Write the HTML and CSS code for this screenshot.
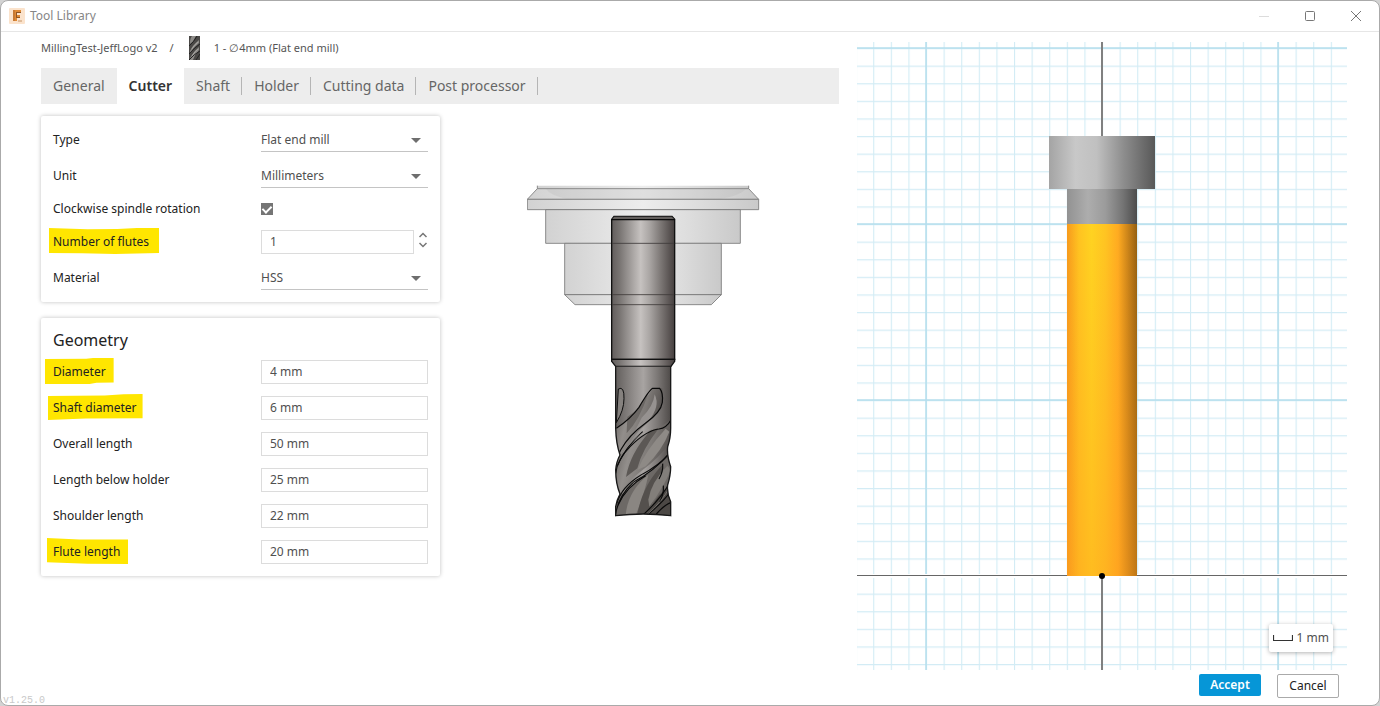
FILE: index.html
```html
<!DOCTYPE html>
<html lang="en">
<head>
<meta charset="utf-8">
<title>Tool Library</title>
<link rel="stylesheet" href="styles.css">
</head>
<body>
<div class="window">
  <header class="titlebar">
    <svg class="app-icon" width="16" height="16" viewBox="0 0 16 16" aria-hidden="true">
      <rect width="16" height="16" rx="1" fill="#fbe3cc"/>
      <path d="M4 2h8v3H8v2h3v3H8v3H4z" fill="#e08a35"/>
      <path d="M4 2h2v11H4z" fill="#c87a33"/>
      <path d="M8 5h4V4H7v6h1zM8 9h3v1H8z" fill="#8f5423"/>
      <path d="M9 13h4" stroke="#c39468"/>
    </svg>
    <span class="window-title">Tool Library</span>
    <div class="window-controls">
      <button type="button" aria-label="Minimize" disabled><svg width="12" height="12" viewBox="0 0 12 12"><path d="M1 6.5h10" stroke="#dcdcdc"/></svg></button>
      <button type="button" aria-label="Maximize"><svg width="12" height="12" viewBox="0 0 12 12"><rect x="1.5" y="1.5" width="9" height="9" rx="1" fill="none" stroke="#777"/></svg></button>
      <button type="button" aria-label="Close"><svg width="12" height="12" viewBox="0 0 12 12"><path d="M1 1l10 10M11 1L1 11" stroke="#777" fill="none"/></svg></button>
    </div>
  </header>

  <main class="content">
    <section class="editor">
      <nav class="breadcrumb" aria-label="Breadcrumb">
        <span>MillingTest-JeffLogo v2</span>
        <span class="slash">/</span>
        <svg class="crumb-icon" width="11" height="24" viewBox="0 0 11 24" aria-hidden="true">
          <rect width="11" height="24" fill="#4a4846"/>
          <path d="M1 7Q1 2 3 0h4Q5 5 1 8zM1 15Q3 10 10 4v3Q4 12 1 17zM1 22Q4 16 10 11v3Q6 18 4 24H1z" fill="#8d8b88"/>
          <path d="M0 10Q5 6 8 0M0 18Q6 11 11 8M0 24Q5 18 11 15M7 24l4-6" fill="none" stroke="#222"/>
          <path d="M3 13Q5 9 9 6M3 20Q6 15 9 13" fill="none" stroke="#a5a39f"/>
        </svg>
        <span>1 - ∅4mm (Flat end mill)</span>
      </nav>

      <div class="tabs" role="tablist">
        <button type="button" role="tab" class="tab">General</button>
        <button type="button" role="tab" class="tab active" aria-selected="true">Cutter</button>
        <button type="button" role="tab" class="tab ruled">Shaft</button>
        <button type="button" role="tab" class="tab ruled">Holder</button>
        <button type="button" role="tab" class="tab ruled">Cutting data</button>
        <button type="button" role="tab" class="tab ruled">Post processor</button>
      </div>

      <div class="panel">
        <form class="cards">
          <section class="card">
            <div class="row"><label for="type">Type</label><span class="select"><select id="type"><option>Flat end mill</option></select></span></div>
            <div class="row"><label for="unit">Unit</label><span class="select"><select id="unit"><option>Millimeters</option></select></span></div>
            <div class="row short"><label for="clockwise">Clockwise spindle rotation</label><input id="clockwise" class="check" type="checkbox" checked></div>
            <div class="row"><label for="flutes"><mark class="hl-a">Number of flutes</mark></label>
              <span class="stepper"><input id="flutes" class="field" type="text" value="1">
                <span class="steps">
                  <button type="button" aria-label="Increase"><svg width="10" height="8" viewBox="0 0 10 8"><path d="M1.500 6L5 2.500 8.500 6" fill="none" stroke="#777" stroke-width="1.5"/></svg></button>
                  <button type="button" aria-label="Decrease"><svg width="10" height="8" viewBox="0 0 10 8"><path d="M1.500 2L5 5.500 8.500 2" fill="none" stroke="#777" stroke-width="1.5"/></svg></button>
                </span>
              </span></div>
            <div class="row"><label for="material">Material</label><span class="select"><select id="material"><option>HSS</option></select></span></div>
          </section>

          <section class="card">
            <h2>Geometry</h2>
            <div class="row"><label for="diameter"><mark class="hl-b">Diameter</mark></label><input id="diameter" class="field" type="text" value="4 mm"></div>
            <div class="row"><label for="shaft"><mark class="hl-c">Shaft diameter</mark></label><input id="shaft" class="field" type="text" value="6 mm"></div>
            <div class="row"><label for="overall">Overall length</label><input id="overall" class="field" type="text" value="50 mm"></div>
            <div class="row"><label for="below">Length below holder</label><input id="below" class="field" type="text" value="25 mm"></div>
            <div class="row"><label for="shoulder">Shoulder length</label><input id="shoulder" class="field" type="text" value="22 mm"></div>
            <div class="row"><label for="flute"><mark class="hl-d">Flute length</mark></label><input id="flute" class="field" type="text" value="20 mm"></div>
          </section>
        </form>

        <figure class="illustration">
          <svg width="234" height="334" viewBox="0 0 234 334" role="img" aria-label="Flat end mill in holder">
            <defs>
              <linearGradient id="steel">
                <stop offset="0" stop-color="#625d5c"/><stop offset=".12" stop-color="#777371"/><stop offset=".3" stop-color="#a19d9b"/>
                <stop offset=".46" stop-color="#c6c2c0"/><stop offset=".6" stop-color="#aaa6a4"/><stop offset=".78" stop-color="#7c7775"/><stop offset=".93" stop-color="#575150"/><stop offset="1" stop-color="#46403f"/>
              </linearGradient>
              <linearGradient id="neck">
                <stop offset="0" stop-color="#625e5c"/><stop offset=".35" stop-color="#94908e"/><stop offset=".5" stop-color="#a8a4a2"/><stop offset=".75" stop-color="#7c7876"/><stop offset="1" stop-color="#4c4846"/>
              </linearGradient>
              <linearGradient id="glass">
                <stop offset="0" stop-color="#d2d2d2"/><stop offset=".25" stop-color="#dfdfdf"/><stop offset=".5" stop-color="#ededed"/><stop offset=".75" stop-color="#dcdcdc"/><stop offset="1" stop-color="#c9c9c9"/>
              </linearGradient>
              <linearGradient id="land" x2="1" y2="0.4">
                <stop offset="0" stop-color="#5d5956"/><stop offset=".35" stop-color="#928e8b"/><stop offset=".65" stop-color="#7d7976"/><stop offset="1" stop-color="#4b4745"/>
              </linearGradient>
              <clipPath id="millBody"><path d="M47 45H212V235Q212 265 203 290Q200 315 212 350Q212 375 203 405Q200 430 212 455V497Q130 487 47 497V470Q50 450 60 432Q47 400 47 360Q49 335 60 315Q48 280 48 240Z"/></clipPath>
            </defs>
            <g transform="translate(-17 -15) scale(.33333)">
              <g fill="url(#glass)" stroke="#777" stroke-width="2.5">
                <path d="M82 47H716V56H82Z" stroke="none"/>
                <path d="M82 56H716L746 88H52Z"/>
                <path d="M82 47v9M716 47v9"/>
                <path d="M52 88H746V119H52Z"/>
                <path d="M107 119H691V220H107Z"/>
                <path d="M164 220H634V374H164Z"/>
                <path d="M164 374H634L604 404H195Z"/>
              </g>
              <path d="M108 57Q120 75 170 87H630Q690 77 707 57Z" fill="#aaa" opacity=".2"/>
              <path d="M305 148L312 139H486L494 148V568H305Z" fill="url(#steel)" stroke="#111" stroke-width="4"/>
              <path d="M307 147L313 140H485L492 147Z" fill="#625e5c"/>
              <path d="M305 149H494" stroke="#080808" stroke-width="4"/>
              <path d="M306 220H493M306 374H493M306 404H493" stroke="#3d3a39" stroke-width="2.5"/>
              <path d="M305 568H494V574L483 589H317L305 574Z" fill="url(#steel)" stroke="#111" stroke-width="4"/>
            </g>
            <g transform="translate(73 165) scale(.33333)">
              <g clip-path="url(#millBody)">
                <rect x="46" y="50" width="168" height="455" fill="url(#neck)"/>
                <path d="M46 235Q80 215 110 180L160 115H187V152Q183 184 145 216Q90 260 47 345Z" fill="url(#land)"/>
                <path d="M82 201L110 180L145 130Q119 210 80 250Z" fill="#6b6764"/>
                <path d="M125 203Q160 170 164 133Q182 170 145 213Q110 240 94 265Z" fill="#969290"/>
                <path d="M55 117Q73 107 72 146Q72 181 49 218Z" fill="#85817e" stroke="#0c0c0c" stroke-width="3"/>
                <path d="M47 470Q59 411 124 363Q183 320 215 271V207Q188 232 151 240Q94 277 60 315Q45 340 47 370Z" fill="url(#land)"/>
                <path d="M78 381Q90 310 151 242L177 234Q126 299 112 355Z" fill="#5c5855"/>
                <path d="M113 359Q136 302 197 236L208 245Q187 300 137 349Z" fill="#8e8a86"/>
                <path d="M47 500Q58 439 118 388Q186 346 213 310V480Q172 478 139 500Z" fill="#6d6966"/>
                <path d="M77 499Q81 425 145 374Q134 430 106 498Z" fill="#8a8682"/>
                <path d="M111 499Q126 407 189 343Q183 417 139 494Z" fill="#54504d"/>
                <path d="M145 449Q153 397 202 347L212 360Q194 407 148 470Z" fill="#827e7a"/>
                <path d="M137 500Q172 428 215 405V500Z" fill="#4c4845"/>
                <g fill="none" stroke="#090909" stroke-width="3.5">
                  <path d="M49 235Q91 207 117 172Q147 121 158 115H179Q190 128 187 157Q183 186 137 219Q86 256 62 300Q48 328 47 356"/>
                  <path d="M47 370Q52 328 91 289Q141 240 177 237Q201 233 213 209"/>
                  <path d="M53 345Q76 292 128 245"/>
                  <path d="M47 491Q56 438 100 396Q162 365 213 305"/>
                  <path d="M50 461Q65 411 122 376Q180 344 208 310"/>
                  <path d="M54 466Q78 410 137 377"/>
                  <path d="M124 499Q184 447 213 391M137 499Q187 459 213 423M169 492Q193 465 212 458"/>
                  <path d="M188 341Q190 365 177 387M190 407Q192 434 179 456"/>
                </g>
                <path d="M69 307Q98 263 149 237M67 431Q84 402 129 374M144 492Q185 456 209 412" fill="none" stroke="#a09c97" stroke-width="1.5"/>
              </g>
              <path d="M47 48V235Q48 280 60 315Q49 335 47 360Q47 400 60 432Q50 450 47 470V497Q130 487 212 497V455Q200 430 203 405Q212 375 212 350Q200 315 203 290Q212 265 212 235V48" fill="none" stroke="#181818" stroke-width="4"/>
            </g>
          </svg>
        </figure>
      </div>
    </section>

    <section class="viewport" aria-label="Tool preview">
      <svg class="scene" viewBox="857 42 490 628" role="img" aria-label="Tool profile on a millimetre grid">
        <defs>
          <pattern id="minor" x="926" y="48" width="17.6" height="17.6" patternUnits="userSpaceOnUse">
            <path d="M0 0H17.6M0 0V17.6" stroke="#d3ecf5" stroke-width="2.2" fill="none"/>
          </pattern>
          <linearGradient id="holder"><stop offset="0" stop-color="#a4a4a4"/><stop offset=".25" stop-color="#c8c8c8"/><stop offset=".45" stop-color="#c0c0c0"/><stop offset=".7" stop-color="#8e8e8e"/><stop offset="1" stop-color="#585858"/></linearGradient>
          <linearGradient id="shank"><stop offset="0" stop-color="#929292"/><stop offset=".3" stop-color="#adadad"/><stop offset=".55" stop-color="#9b9b9b"/><stop offset=".8" stop-color="#747474"/><stop offset="1" stop-color="#4c4c4c"/></linearGradient>
          <linearGradient id="cut"><stop offset="0" stop-color="#f79a1d"/><stop offset=".17" stop-color="#ffc321"/><stop offset=".35" stop-color="#ffd321"/><stop offset=".55" stop-color="#ffc422"/><stop offset=".73" stop-color="#ffab21"/><stop offset=".86" stop-color="#ce861a"/><stop offset="1" stop-color="#946011"/></linearGradient>
          <linearGradient id="warm" x2="0" y2="1"><stop offset="0" stop-color="#ff9a1e" stop-opacity="0"/><stop offset="1" stop-color="#ff9a1e" stop-opacity=".4"/></linearGradient>
        </defs>
        <rect x="857" y="42" width="490" height="628" fill="url(#minor)"/>
        <path d="M857 48H1347M857 224H1347M857 400H1347M926 42V670M1278 42V670" stroke="#b5deed" stroke-width="1.5"/>
        <path d="M857 576H1347" stroke="#fff" stroke-width="4"/>
        <path d="M857 575.5H1347" stroke="#666"/>
        <path d="M1102 42V670" stroke="#808080" stroke-width="2"/>
        <rect x="1049" y="136" width="106" height="53" fill="url(#holder)"/>
        <rect x="1067" y="189" width="70" height="35" fill="url(#shank)"/>
        <rect x="1067" y="224" width="70" height="352" fill="url(#cut)"/>
        <rect x="1067" y="224" width="70" height="352" fill="url(#warm)"/>
        <circle cx="1102" cy="576" r="3" fill="#000"/>
      </svg>
      <div class="scale">
        <svg width="20" height="7" viewBox="0 0 20 7" aria-hidden="true"><path d="M.5 0v5.500H19.500V0" fill="none" stroke="#333" stroke-width="1.2"/></svg>
        <span>1 mm</span>
      </div>
    </section>
  </main>

  <footer class="actions">
    <span class="version">v1.25.0</span>
    <button type="button" class="btn primary">Accept</button>
    <button type="button" class="btn">Cancel</button>
  </footer>
</div>
</body>
</html>
```
FILE: styles.css
```css
* { box-sizing: border-box; }

body {
  margin: 0;
  background: #d3d3d3;
  color: #222;
  font: 12px/16px "Noto Sans", "Open Sans", sans-serif;
}

button, input, select { font: inherit; color: inherit; }

.window {
  display: flex;
  flex-direction: column;
  min-height: 100vh;
  border: 1px solid #aaa;
  border-radius: 8px;
  background: #fff;
}

.titlebar {
  display: flex;
  align-items: center;
  height: 31px;
  padding: 0 11px 0 8px;
  border-bottom: 1px solid #e6e6e6;
}

.window-title { flex: 1; margin-left: 5px; color: #868686; }

.window-controls { display: flex; gap: 22px; }

.window-controls button {
  display: flex;
  justify-content: center;
  width: 24px;
  padding: 0;
  border: 0;
  background: none;
}

.content {
  flex: 1;
  display: grid;
  grid-template-columns: 798fr 490fr;
  gap: 18px;
  padding: 0 32px 0 40px;
}

.breadcrumb {
  display: flex;
  align-items: center;
  height: 36px;
  padding-bottom: 4px;
  color: #555;
  font-size: 11px;
}

.slash { margin-left: 12px; }
.crumb-icon { margin: 0 14px 0 15px; }

.tabs { display: flex; height: 36px; background: #ededed; }

.tab {
  position: relative;
  padding: 0 12px;
  border: 0;
  background: none;
  color: #666;
  font-size: 14px;
}

.tab.active { background: #fff; color: #333; font-weight: 600; }

.tab.ruled::after {
  content: "";
  position: absolute;
  top: 9px;
  right: 0;
  height: 18px;
  border-right: 1px solid #b5b5b5;
}

.panel { display: flex; padding-top: 12px; }

.cards { flex: 0 0 399px; display: grid; gap: 16px; }

.card {
  padding: 6px 12px;
  border-radius: 2px;
  background: #fff;
  box-shadow: 0 0 4px rgba(0, 0, 0, .25);
}

.card h2 {
  margin: 0;
  padding-top: 2px;
  font-size: 16px;
  font-weight: 400;
  line-height: 28px;
}

.row {
  display: grid;
  grid-template-columns: 208px 1fr;
  align-items: center;
  height: 36px;
}

.row.short { height: 30px; }

.select { position: relative; display: block; }

.select select {
  display: block;
  width: 100%;
  height: 24px;
  padding: 0;
  border: 0;
  border-bottom: 1px solid #c4c4c4;
  border-radius: 0;
  background: none;
  color: #505050;
  appearance: none;
}

.select::after {
  content: "";
  position: absolute;
  top: 10px;
  right: 7px;
  border: 5px solid transparent;
  border-top-color: #6e6e6e;
  border-bottom: 0;
  pointer-events: none;
}

.field {
  width: 100%;
  height: 24px;
  padding: 0 8px 2px;
  border: 1px solid #dcdcdc;
  background: #fff;
  color: #505050;
}

.check {
  display: grid;
  place-items: center;
  width: 12px;
  height: 12px;
  margin: 0;
  background: #757575;
  appearance: none;
}

.check:checked::after {
  content: "";
  width: 4px;
  height: 7px;
  margin-bottom: 2px;
  border: solid #fff;
  border-width: 0 2px 2px 0;
  transform: rotate(45deg);
}

.stepper { display: flex; gap: 4px; }
.steps { display: grid; align-content: center; gap: 2px; padding-bottom: 4px; }

.steps button {
  display: block;
  padding: 0;
  border: 0;
  background: none;
}

.steps svg { display: block; }

mark {
  display: inline-block;
  margin: 0 0 2px -4px;
  padding: 6px 10px 4px 4px;
  background: #ffe600;
  color: inherit;
}

.hl-a { clip-path: polygon(0 0, 35% 5%, 62% 4%, 80% 0, 100% 0, 100% 96%, 60% 100%, 30% 97%, 0 96%); }
.hl-b { margin-left: -8px; padding-left: 8px; padding-right: 8px; clip-path: polygon(0 4%, 60% 3%, 70% 0, 100% 0, 100% 94%, 75% 95%, 65% 100%, 0 100%); }
.hl-c { margin-left: -5px; padding-left: 5px; padding-right: 6px; clip-path: polygon(0 8%, 60% 6%, 80% 1%, 100% 0, 100% 93%, 40% 94%, 0 100%); }
.hl-d { margin-left: -6px; padding-left: 6px; padding-right: 8px; clip-path: polygon(0 0, 40% 6%, 100% 6%, 100% 100%, 50% 99%, 0 93%); }

.illustration {
  flex: 1;
  margin: 0;
  padding: 69px 0 0 8px;
  text-align: center;
}

.viewport { position: relative; align-self: start; margin-top: 10px; }

.scene { display: block; width: 100%; height: auto; }

.scale {
  position: absolute;
  right: 14px;
  bottom: 18px;
  display: flex;
  align-items: center;
  gap: 4px;
  padding: 6px 4px;
  border-radius: 2px;
  background: #fff;
  box-shadow: 0 1px 4px rgba(0, 0, 0, .3);
  color: #505050;
}

.actions {
  position: relative;
  display: flex;
  align-items: flex-start;
  justify-content: flex-end;
  gap: 16px;
  padding: 4px 40px 7px;
}

.btn {
  min-width: 62px;
  height: 24px;
  padding: 0 8px;
  border: 1px solid #aaa;
  border-radius: 2px;
  background: #fff;
}

.btn.primary {
  height: 22px;
  border: 0;
  background: #0696d7;
  color: #fff;
  font-weight: 600;
}

.version {
  position: absolute;
  bottom: -3px;
  left: 2px;
  color: #c9c9c9;
  font: 10px/14px "Liberation Mono", monospace;
}
```
